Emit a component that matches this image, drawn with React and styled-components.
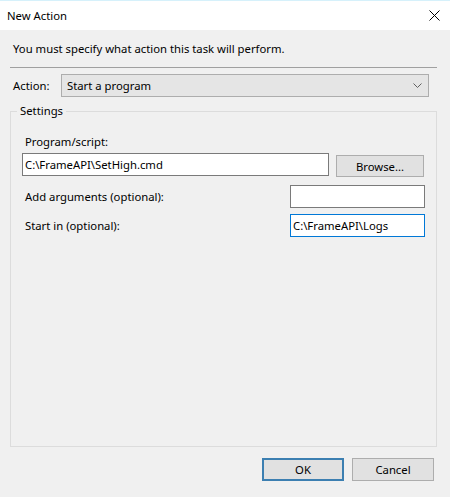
import React from "react";
import styled, { createGlobalStyle } from "styled-components";

const Global = createGlobalStyle`
	html, body {
		margin: 0;
		padding: 0;
		background: #f0f0f0;
	}
	body {
		font-family: "Noto Sans", "Open Sans", sans-serif;
		font-size: 11.3px;
		color: #000;
	}
`;

const Window = styled.div`
	width: 450px;
	height: 497px;
	box-sizing: border-box;
	background: #f0f0f0;
	border-top: 1px solid #d6f1fb;
	display: flex;
	flex-direction: column;
`;

const TitleBar = styled.div`
	height: 29px;
	background: #fff;
	display: flex;
	align-items: center;
	justify-content: space-between;
	padding: 0 10px 0 7px;
	.title {
		margin-top: -1px;
	}
`;

const Body = styled.div`
	flex: 1;
	display: flex;
	flex-direction: column;
	padding: 0 13px 0 10px;
`;

const Intro = styled.div`
	margin-top: 11px;
	padding-left: 3px;
	line-height: 16px;
`;

const Separator = styled.div`
	margin-top: 10px;
	height: 1px;
	background: #a0a0a0;
`;

const ActionRow = styled.div`
	margin-top: 6px;
	display: flex;
	align-items: center;
	padding-left: 3px;
	label {
		width: 48px;
	}
`;

const Select = styled.div`
	width: 368px;
	height: 23px;
	box-sizing: border-box;
	background: #e5e5e5;
	border: 1px solid #adadad;
	display: flex;
	align-items: center;
	justify-content: space-between;
	padding: 0 6px 0 5px;
`;

const Group = styled.fieldset`
	margin: 6px 0 0 0;
	padding: 0 0 0 11px;
	border: 1px solid #dcdcdc;
	height: 344px;
	box-sizing: border-box;
	legend {
		padding: 0 3px;
		margin-left: -5px;
		line-height: 16px;
	}
`;

const Fields = styled.div`
	display: flex;
	flex-direction: column;
	padding-right: 11px;
`;

const FieldLabel = styled.div`
	padding-left: 3px;
	line-height: 16px;
	margin-top: ${(p) => p.$top || 0}px;
`;

const Row = styled.div`
	display: flex;
	align-items: ${(p) => (p.$center ? "center" : "flex-start")};
	justify-content: space-between;
	margin-top: ${(p) => p.$top || 0}px;
`;

const TextBox = styled.div`
	width: ${(p) => p.$w}px;
	height: 23px;
	box-sizing: border-box;
	background: #fff;
	border: 1px solid ${(p) => (p.$focused ? "#0078d7" : "#7a7a7a")};
	padding: 0 2px;
	display: flex;
	align-items: center;
	white-space: nowrap;
	overflow: hidden;
`;

const Button = styled.button`
	width: ${(p) => p.$w || 82}px;
	height: ${(p) => p.$h || 23}px;
	box-sizing: border-box;
	background: #e1e1e1;
	border: ${(p) => (p.$default ? "2px solid #3c7fb1" : "1px solid #adadad")};
	font-family: inherit;
	font-size: 11.3px;
	color: #000;
	padding: 0;
	margin-top: ${(p) => p.$top || 0}px;
	margin-right: ${(p) => p.$right || 0}px;
`;

const Footer = styled.div`
	margin-top: 11px;
	display: flex;
	justify-content: flex-end;
	gap: 8px;
	padding-right: 3px;
`;

function CloseIcon() {
	return (
		<svg width="11" height="11" viewBox="0 0 11 11">
			<path d="M0.5 0.5 L10.5 10.5 M10.5 0.5 L0.5 10.5" stroke="#000" strokeWidth="1" fill="none" />
		</svg>
	);
}

function Chevron() {
	return (
		<svg width="9" height="5" viewBox="0 0 9 5">
			<path d="M0.5 0.5 L4.5 4.5 L8.5 0.5" stroke="#606060" strokeWidth="1" fill="none" />
		</svg>
	);
}

export default function App() {
	return (
		<>
			<Global />
			<Window>
				<TitleBar>
					<span className="title">New Action</span>
					<CloseIcon />
				</TitleBar>
				<Body>
					<Intro>You must specify what action this task will perform.</Intro>
					<Separator />
					<ActionRow>
						<label>Action:</label>
						<Select>
							<span>Start a program</span>
							<Chevron />
						</Select>
					</ActionRow>
					<Group>
						<legend>Settings</legend>
						<Fields>
							<FieldLabel $top={15}>Program/script:</FieldLabel>
							<Row $top={3}>
								<TextBox $w={307}>C:\FrameAPI\SetHigh.cmd</TextBox>
								<Button $w={88} $h={22} $top={2} $right={1}>
									Browse...
								</Button>
							</Row>
							<Row $center $top={8}>
								<FieldLabel>Add arguments (optional):</FieldLabel>
								<TextBox $w={135} />
							</Row>
							<Row $center $top={6}>
								<FieldLabel>Start in (optional):</FieldLabel>
								<TextBox $w={135} $focused>
									C:\FrameAPI\Logs
								</TextBox>
							</Row>
						</Fields>
					</Group>
					<Footer>
						<Button $default>OK</Button>
						<Button>Cancel</Button>
					</Footer>
				</Body>
			</Window>
		</>
	);
}
